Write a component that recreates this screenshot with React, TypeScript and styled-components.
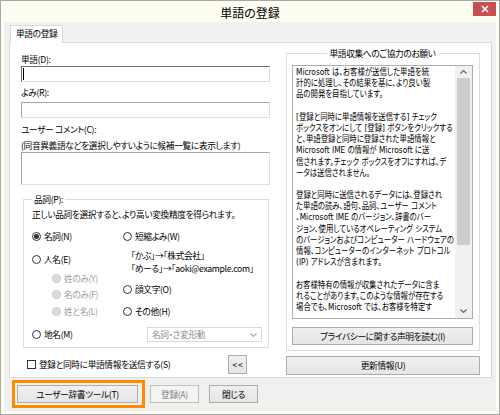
import React from "react";
import styled, { createGlobalStyle } from "styled-components";

const FONT = `"Noto Sans CJK JP", "Noto Sans", sans-serif`;

const GlobalStyle = createGlobalStyle`
  html, body { margin: 0; padding: 0; background: #fff; }
  * { box-sizing: border-box; }
`;

const Window = styled.div`
  width: 500px;
  height: 415px;
  border: 1px solid #a9a9a9;
  background: #fdfdf2;
  display: flex;
  flex-direction: column;
  font-family: ${FONT};
  font-size: 8.7px;
  letter-spacing: -0.35px;
  font-feature-settings: "palt";
  color: #000;
`;

const TitleBar = styled.div`
  position: relative;
  height: 21px;
  flex: none;
  display: flex;
  align-items: center;
  justify-content: center;
  font-size: 12px;
  letter-spacing: 0;
  padding-top: 1px;
`;

const CloseButton = styled.div`
  position: absolute;
  top: 1px;
  right: 3px;
  width: 23px;
  height: 14px;
  background: #c75050;
  display: flex;
  align-items: center;
  justify-content: center;
`;

const Client = styled.div`
  flex: 1;
  margin: 0 3px 3px 3px;
  background: #f0f0f0;
  display: flex;
  flex-direction: column;
  padding: 3px 4px 0 5px;
`;

const TabStrip = styled.div`
  display: flex;
  height: 17px;
  padding-left: 1px;
  flex: none;
`;

const Tab = styled.div`
  position: relative;
  z-index: 1;
  height: 18px;
  background: #fff;
  border: 1px solid #d9d9d9;
  border-bottom: none;
  padding: 0 5px;
  line-height: 16px;
`;

const Panel = styled.div`
  height: 336px;
  flex: none;
  background: #fff;
  border: 1px solid #d9d9d9;
  display: flex;
  gap: 16px;
  padding: 4px 11px 0 11px;
`;

const LeftColumn = styled.div`
  width: 249px;
  flex: none;
  display: flex;
  flex-direction: column;
  padding-top: 6px;
`;

const RightColumn = styled.div`
  width: 194px;
  flex: none;
  display: flex;
  flex-direction: column;
`;

const Label = styled.div<{ $mt?: number }>`
  line-height: 13px;
  white-space: nowrap;
  margin-top: ${(p) => p.$mt ?? 0}px;
`;

const TextInput = styled.div<{ $focused?: boolean; $mt?: number; $h?: number }>`
  height: ${(p) => p.$h ?? 16}px;
  margin-top: ${(p) => p.$mt ?? 0}px;
  background: #fff;
  border: 1px solid;
  border-color: ${(p) =>
    p.$focused ? "#6e6e6e #dadada #dadada #6e6e6e" : "#a6a6a6 #e1e1e1 #e1e1e1 #a6a6a6"};
  display: flex;
  align-items: flex-start;
  padding: 1px 0 0 1px;
`;

const Caret = styled.span`
  width: 1px;
  height: 12px;
  background: #000;
`;

const Group = styled.fieldset<{ $mt?: number; $ml?: number; $pad: string }>`
  margin: ${(p) => p.$mt ?? 0}px 0 0 ${(p) => p.$ml ?? 0}px;
  min-width: 0;
  border: 1px solid #dcdcdc;
  padding: ${(p) => p.$pad};
  display: flex;
  flex-direction: column;
`;

const Legend = styled.legend<{ $center?: boolean }>`
  padding: 0 2px;
  line-height: 13px;
  margin-left: ${(p) => (p.$center ? "auto" : "0")};
  margin-right: ${(p) => (p.$center ? "auto" : "0")};
`;

const RadioArea = styled.div`
  display: flex;
  margin-top: 9px;
`;

const RadioCol = styled.div<{ $w?: number }>`
  display: flex;
  flex-direction: column;
  width: ${(p) => (p.$w ? `${p.$w}px` : "auto")};
  flex: none;
`;

const Radio = styled.div<{ $mt?: number; $indent?: number; $disabled?: boolean }>`
  display: flex;
  align-items: center;
  gap: 3px;
  height: 13px;
  line-height: 13px;
  white-space: nowrap;
  margin-top: ${(p) => p.$mt ?? 0}px;
  padding-left: ${(p) => p.$indent ?? 0}px;
  color: ${(p) => (p.$disabled ? "#a0a0a0" : "#000")};
`;

const RadioCircle = styled.span<{ $checked?: boolean; $disabled?: boolean }>`
  width: 9px;
  height: 9px;
  flex: none;
  border-radius: 50%;
  border: 1px solid ${(p) => (p.$disabled ? "#c8c8c8" : "#333")};
  background: ${(p) => (p.$disabled ? "#dcdcdc" : "#fff")};
  display: flex;
  align-items: center;
  justify-content: center;
  &::after {
    content: "";
    width: 5px;
    height: 5px;
    border-radius: 50%;
    background: #333;
    display: ${(p) => (p.$checked ? "block" : "none")};
  }
`;

const Note = styled.div<{ $mt?: number }>`
  line-height: 13px;
  height: 13px;
  padding-left: 8px;
  white-space: nowrap;
  margin-top: ${(p) => p.$mt ?? 0}px;
`;

const PlaceRow = styled.div`
  display: flex;
  align-items: center;
  height: 15px;
  margin-top: 9px;
`;

const PlaceRadioSlot = styled.div`
  width: 115px;
  flex: none;
`;

const ComboBox = styled.div`
  width: 115px;
  height: 15px;
  border: 1px solid #d9d9d9;
  background: #fff;
  color: #8c8c8c;
  display: flex;
  align-items: center;
  justify-content: space-between;
  padding: 0 4px 0 4px;
  line-height: 13px;
`;

const CheckRow = styled.div`
  display: flex;
  align-items: center;
  height: 19px;
  margin-top: 7px;
  padding-left: 6px;
  padding-right: 23px;
  gap: 3px;
`;

const CheckBox = styled.span`
  width: 9px;
  height: 9px;
  flex: none;
  border: 1px solid #333;
  background: #fff;
`;

const Button = styled.div<{ $w?: number; $h?: number; $mt?: number; $ml?: number; $disabled?: boolean }>`
  width: ${(p) => (p.$w ? `${p.$w}px` : "auto")};
  height: ${(p) => p.$h ?? 18}px;
  margin-top: ${(p) => p.$mt ?? 0}px;
  margin-left: ${(p) => p.$ml ?? 0}px;
  flex: none;
  border: 1px solid ${(p) => (p.$disabled ? "#bfbfbf" : "#acacac")};
  background: ${(p) => (p.$disabled ? "#f4f4f4" : "linear-gradient(#f0f0f0, #e5e5e5)")};
  color: ${(p) => (p.$disabled ? "#838383" : "#000")};
  display: flex;
  align-items: center;
  justify-content: center;
  white-space: nowrap;
  line-height: 13px;
`;

const ArrowButton = styled(Button)`
  margin-left: auto;
  letter-spacing: 1px;
  padding-left: 1px;
`;

const InfoBox = styled.div`
  height: 254px;
  border: 1px solid #abadb3;
  background: #fff;
  display: flex;
  overflow: hidden;
`;

/* Meiryo UI style condensed text: wide Latin + CJK, compressed horizontally */
const InfoText = styled.div`
  flex: none;
  width: 198px;
  margin-right: -36px;
  transform: scaleX(0.82);
  transform-origin: 0 0;
  overflow: hidden;
  padding: 1px 0 0 3.7px;
  font-family: "DejaVu Sans", "Noto Sans CJK JP", sans-serif;
  font-size: 9px;
  letter-spacing: 0;
  line-height: 11.2px;
`;

const InfoLine = styled.div`
  white-space: pre;
  height: 11.2px;
`;

const ScrollBar = styled.div`
  width: 17px;
  flex: none;
  background: #f0f0f0;
  display: flex;
  flex-direction: column;
`;

const ScrollArrow = styled.div<{ $h: number }>`
  height: ${(p) => p.$h}px;
  flex: none;
  display: flex;
  align-items: center;
  justify-content: center;
`;

const ScrollThumb = styled.div`
  height: 167px;
  margin: 0 2px;
  background: #cdcdcd;
  flex: none;
`;

const ScrollTrack = styled.div`
  flex: 1;
`;

const BottomBar = styled.div`
  display: flex;
  align-items: flex-start;
  padding: 2px 0 0 3px;
`;

const Highlight = styled.div`
  border: 3px solid #ff8a00;
  padding: 2px 4px 2px 2px;
  flex: none;
`;

const Chevron = ({ up, color = "#606060" }: { up?: boolean; color?: string }) => (
  <svg width="7" height="4" viewBox="0 0 7 4">
    <path
      d={up ? "M0.5 3.5 L3.5 0.5 L6.5 3.5" : "M0.5 0.5 L3.5 3.5 L6.5 0.5"}
      fill="none"
      stroke={color}
      strokeWidth="1.1"
    />
  </svg>
);

const infoLines = [
  "Microsoft は、お客様が送信した単語を統",
  "計的に処理し、その結果を基に、より良い製",
  "品の開発を目指しています。",
  "",
  "[登録と同時に単語情報を送信する] チェック",
  "ボックスをオンにして [登録] ボタンをクリックする",
  "と、単語登録と同時に登録された単語情報と",
  "Microsoft IME の情報が Microsoft に送",
  "信されます。チェック ボックスをオフにすれば、デ",
  "ータは送信されません。",
  "",
  "登録と同時に送信されるデータには、登録され",
  "た単語の読み、語句、品詞、ユーザー コメント",
  "、Microsoft IME のバージョン、辞書のバー",
  "ジョン、使用しているオペレーティング システム",
  "のバージョンおよびコンピューター ハードウェアの",
  "情報、コンピューターのインターネット プロトコル",
  "(IP) アドレスが含まれます。",
  "",
  "お客様特有の情報が収集されたデータに含ま",
  "れることがあります。このような情報が存在する",
  "場合でも、Microsoft では、お客様を特定す",
];

export default function App() {
  return (
    <>
      <GlobalStyle />
      <Window>
        <TitleBar>
          単語の登録
          <CloseButton>
            <svg width="8" height="8" viewBox="0 0 8 8">
              <path d="M1 1 L7 7 M7 1 L1 7" stroke="#fff" strokeWidth="1.6" />
            </svg>
          </CloseButton>
        </TitleBar>
        <Client>
          <TabStrip>
            <Tab>単語の登録</Tab>
          </TabStrip>
          <Panel>
            <LeftColumn>
              <Label>単語(D):</Label>
              <TextInput $focused>
                <Caret />
              </TextInput>
              <Label $mt={4}>よみ(R):</Label>
              <TextInput $mt={3} />
              <Label $mt={5}>ユーザー コメント(C):</Label>
              <Label $mt={3}>(同音異義語などを選択しやすいように候補一覧に表示します)</Label>
              <TextInput $h={33} />
              <Group $mt={8} $ml={2} $pad="2px 0 5px 8px" style={{ width: 246 }}>
                <Legend>品詞(P):</Legend>
                <Label>正しい品詞を選択すると、より高い変換精度を得られます。</Label>
                <RadioArea>
                  <RadioCol $w={91}>
                    <Radio>
                      <RadioCircle $checked />
                      名詞(N)
                    </Radio>
                    <Radio $mt={10}>
                      <RadioCircle />
                      人名(E)
                    </Radio>
                    <Radio $mt={6} $indent={20} $disabled>
                      <RadioCircle $disabled />
                      姓のみ(Y)
                    </Radio>
                    <Radio $mt={3} $indent={20} $disabled>
                      <RadioCircle $disabled />
                      名のみ(F)
                    </Radio>
                    <Radio $mt={4} $indent={20} $disabled>
                      <RadioCircle $disabled />
                      姓と名(L)
                    </Radio>
                  </RadioCol>
                  <RadioCol>
                    <Radio>
                      <RadioCircle />
                      短縮よみ(W)
                    </Radio>
                    <Note $mt={6}>「かぶ」→「株式会社」</Note>
                    <Note>「めーる」→「aoki@example.com」</Note>
                    <Radio $mt={8}>
                      <RadioCircle />
                      顔文字(O)
                    </Radio>
                    <Radio $mt={9}>
                      <RadioCircle />
                      その他(H)
                    </Radio>
                  </RadioCol>
                </RadioArea>
                <PlaceRow>
                  <PlaceRadioSlot>
                    <Radio>
                      <RadioCircle />
                      地名(M)
                    </Radio>
                  </PlaceRadioSlot>
                  <ComboBox>
                    <span>名詞・さ変形動</span>
                    <Chevron color="#a8a8a8" />
                  </ComboBox>
                </PlaceRow>
              </Group>
              <CheckRow>
                <CheckBox />
                <span>登録と同時に単語情報を送信する(S)</span>
                <ArrowButton $w={19} $h={19}>&lt;&lt;</ArrowButton>
              </CheckRow>
            </LeftColumn>
            <RightColumn>
              <Group $pad="5px 6px 5px 5px">
                <Legend $center>単語収集へのご協力のお願い</Legend>
                <InfoBox>
                  <InfoText>
                    {infoLines.map((l, i) => (
                      <InfoLine key={i}>{l}</InfoLine>
                    ))}
                  </InfoText>
                  <ScrollBar>
                    <ScrollArrow $h={12}>
                      <Chevron up />
                    </ScrollArrow>
                    <ScrollThumb />
                    <ScrollTrack />
                    <ScrollArrow $h={15}>
                      <Chevron />
                    </ScrollArrow>
                  </ScrollBar>
                </InfoBox>
                <Button $mt={8}>プライバシーに関する声明を読む(I)</Button>
              </Group>
              <Button $mt={5} $h={19}>更新情報(U)</Button>
            </RightColumn>
          </Panel>
          <BottomBar>
            <Highlight>
              <Button $w={121}>ユーザー辞書ツール(T)</Button>
            </Highlight>
            <Button $w={49} $mt={5} $ml={5} $disabled>
              登録(A)
            </Button>
            <Button $w={49} $mt={5} $ml={10}>
              閉じる
            </Button>
          </BottomBar>
        </Client>
      </Window>
    </>
  );
}
